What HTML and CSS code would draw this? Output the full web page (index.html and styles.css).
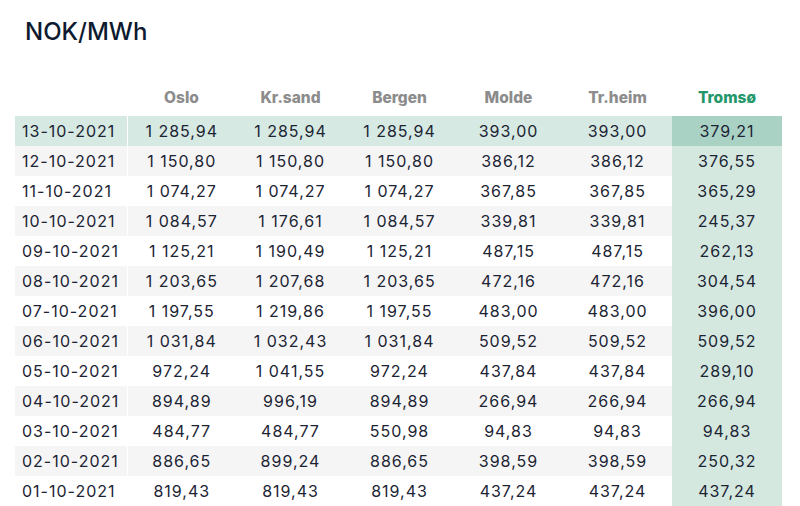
FILE: index.html
```html
<!DOCTYPE html>
<html>
<head>
<meta charset="utf-8">
<link rel="stylesheet" href="styles.css">
</head>
<body>
<div class="page">
  <h1 class="title">NOK/MWh</h1>
  <table class="prices">
    <colgroup>
      <col class="c-date"><col class="c-num"><col class="c-num"><col class="c-num"><col class="c-num"><col class="c-num"><col class="c-last">
    </colgroup>
    <thead>
      <tr>
        <th></th><th>Oslo</th><th>Kr.sand</th><th>Bergen</th><th>Molde</th><th>Tr.heim</th><th class="hl">Tromsø</th>
      </tr>
    </thead>
    <tbody>
      <tr class="today"><td>13-10-2021</td><td>1 285,94</td><td>1 285,94</td><td>1 285,94</td><td>393,00</td><td>393,00</td><td class="hl">379,21</td></tr>
      <tr><td>12-10-2021</td><td>1 150,80</td><td>1 150,80</td><td>1 150,80</td><td>386,12</td><td>386,12</td><td class="hl">376,55</td></tr>
      <tr><td>11-10-2021</td><td>1 074,27</td><td>1 074,27</td><td>1 074,27</td><td>367,85</td><td>367,85</td><td class="hl">365,29</td></tr>
      <tr><td>10-10-2021</td><td>1 084,57</td><td>1 176,61</td><td>1 084,57</td><td>339,81</td><td>339,81</td><td class="hl">245,37</td></tr>
      <tr><td>09-10-2021</td><td>1 125,21</td><td>1 190,49</td><td>1 125,21</td><td>487,15</td><td>487,15</td><td class="hl">262,13</td></tr>
      <tr><td>08-10-2021</td><td>1 203,65</td><td>1 207,68</td><td>1 203,65</td><td>472,16</td><td>472,16</td><td class="hl">304,54</td></tr>
      <tr><td>07-10-2021</td><td>1 197,55</td><td>1 219,86</td><td>1 197,55</td><td>483,00</td><td>483,00</td><td class="hl">396,00</td></tr>
      <tr><td>06-10-2021</td><td>1 031,84</td><td>1 032,43</td><td>1 031,84</td><td>509,52</td><td>509,52</td><td class="hl">509,52</td></tr>
      <tr><td>05-10-2021</td><td>972,24</td><td>1 041,55</td><td>972,24</td><td>437,84</td><td>437,84</td><td class="hl">289,10</td></tr>
      <tr><td>04-10-2021</td><td>894,89</td><td>996,19</td><td>894,89</td><td>266,94</td><td>266,94</td><td class="hl">266,94</td></tr>
      <tr><td>03-10-2021</td><td>484,77</td><td>484,77</td><td>550,98</td><td>94,83</td><td>94,83</td><td class="hl">94,83</td></tr>
      <tr><td>02-10-2021</td><td>886,65</td><td>899,24</td><td>886,65</td><td>398,59</td><td>398,59</td><td class="hl">250,32</td></tr>
      <tr><td>01-10-2021</td><td>819,43</td><td>819,43</td><td>819,43</td><td>437,24</td><td>437,24</td><td class="hl">437,24</td></tr>
    </tbody>
  </table>
</div>
</body>
</html>
```
FILE: styles.css
```css
html, body {
  margin: 0;
  padding: 0;
  background: #ffffff;
}
.page {
  padding: 0 0 0 15px;
  font-family: "Inter", "Liberation Sans", sans-serif;
  color: #1c2434;
}
.title {
  margin: 0;
  padding: 17px 0 0 10px;
  height: 80px;
  box-sizing: border-box;
  font-size: 24px;
  font-weight: 500;
  line-height: 30px;
  color: #0d1a30;
  letter-spacing: 0;
}
.prices {
  border-collapse: collapse;
  table-layout: fixed;
  width: 767px;
}
.c-date { width: 112px; }
.c-num { width: 109px; }
.c-last { width: 110px; }
.prices th {
  height: 34px;
  padding: 0 0 2px 0;
  font-size: 15.5px;
  font-weight: 800;
  color: #8c8c8c;
  text-align: center;
  vertical-align: middle;
}
.prices th.hl {
  color: #23976a;
}
.prices td {
  height: 30px;
  padding: 0;
  font-size: 16px;
  letter-spacing: 1px;
  text-align: center;
  vertical-align: middle;
  line-height: 30px;
}
.prices td:first-child {
  text-align: left;
  padding-left: 7px;
  border-right: 1px solid #ffffff;
}
.prices tbody tr:nth-child(even) {
  background: #f5f5f5;
}
.prices tbody tr.today {
  background: #d6e9e2;
}
.prices td.hl {
  background: #d4e8e0;
}
.prices tr.today td.hl {
  background: #aad2c4;
}
```
